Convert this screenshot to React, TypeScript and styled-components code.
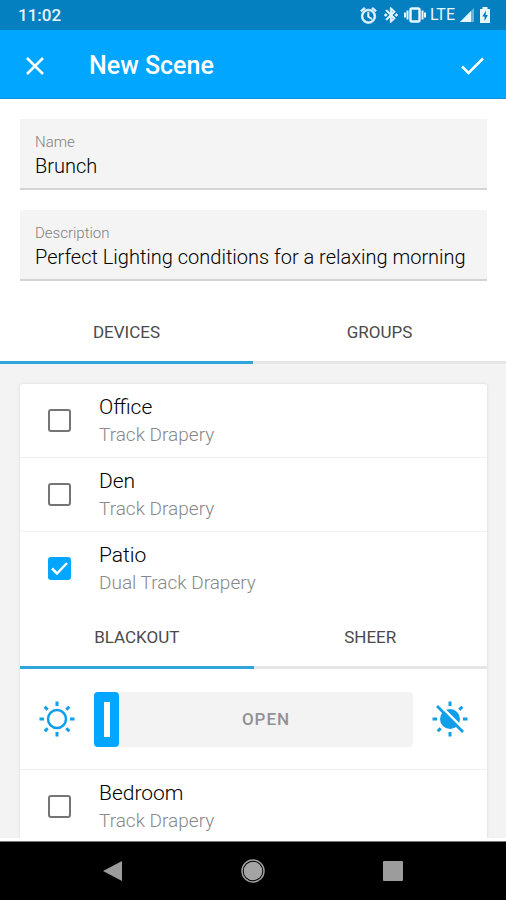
import React, { useState } from "react";
import styled, { createGlobalStyle } from "styled-components";
import { MdAlarm, MdBluetoothConnected } from "react-icons/md";

const BLUE = "#00a6ff";

const GlobalStyle = createGlobalStyle`
  *, *::before, *::after { box-sizing: border-box; }
  body { margin: 0; background: #fff; font-family: Roboto, "Noto Sans", sans-serif; color: #1a1a1a; }
  button, input { font: inherit; color: inherit; }
`;

const Screen = styled.div`
  display: flex;
  flex-direction: column;
  height: 100vh;
`;

const StatusBar = styled.div`
  display: flex;
  flex: none;
  align-items: center;
  justify-content: space-between;
  height: 30px;
  padding: 0 15px 0 18px;
  background: #047fbf;
  color: #e8f6fd;
  font-size: 17px;
  font-weight: 500;
  line-height: 32px;
`;

const StatusIcons = styled.div`
  display: flex;
  align-items: center;
  gap: 4px;

  path:not([fill]) { stroke: currentColor; stroke-width: 1px; }
`;

const Network = styled.span`
  font-size: 16px;
  font-weight: 400;
  line-height: 32px;
`;

const AppBar = styled.header`
  display: flex;
  flex: none;
  align-items: center;
  height: 69px;
  padding: 3px 20px 0;
  background: ${BLUE};
  border-bottom: 1px solid #1191d6;
  color: #fff;
`;

const IconButton = styled.button`
  display: flex;
  padding: 0;
  border: 0;
  background: none;
  cursor: pointer;
`;

const Title = styled.h1`
  flex: 1;
  margin: 0 0 0 39px;
  font-size: 25px;
  font-weight: 500;
  line-height: 30px;
`;

const Fields = styled.div`
  display: flex;
  flex: none;
  flex-direction: column;
  gap: 20px;
  padding: 20px 19px 20px 20px;
`;

const Field = styled.label`
  display: block;
  height: 71px;
  padding: 14px 10px 0 15px;
  background: #f4f4f4;
  border-bottom: 2px solid #d4d4d4;
`;

const FieldLabel = styled.span`
  display: block;
  font-size: 15px;
  font-weight: 300;
  line-height: 18px;
  color: #808080;
`;

const FieldInput = styled.input`
  display: block;
  width: 100%;
  height: 30px;
  padding: 0;
  border: 0;
  outline: 0;
  background: none;
  font-size: 20px;
  font-weight: 300;
  color: #000;
`;

const TabList = styled.div`
  display: flex;
  flex: none;
`;

const Tab = styled.button<{ $active: boolean }>`
  flex: 1;
  height: 63px;
  padding: 2px 0 0;
  border: 0;
  border-bottom: 3px solid ${(p) => (p.$active ? "#2fa5da" : "#e6e6e6")};
  background: #fff;
  font-size: 17px;
  color: #4a4a4a;
  cursor: pointer;
`;

const Body = styled.main`
  flex: 1;
  min-height: 0;
  overflow-y: auto;
  scrollbar-width: none;
  padding: 20px 19px 0 20px;
  background: #f3f3f3;
  border-bottom: 3px solid #fff;
`;

const Card = styled.section`
  background: #fff;
  border-radius: 3px 3px 0 0;
  box-shadow: 0 0 3px rgba(0, 0, 0, 0.12);
`;

const Row = styled.label<{ $divided: boolean }>`
  display: flex;
  align-items: center;
  gap: 28px;
  height: 74px;
  padding: 0 28px;
  border-bottom: 1px solid ${(p) => (p.$divided ? "#f0f0f0" : "transparent")};
  cursor: pointer;
`;

const CheckWrap = styled.span`
  display: grid;

  > * { grid-area: 1 / 1; }
`;

const CheckInput = styled.input`
  appearance: none;
  width: 23px;
  height: 23px;
  margin: 0;
  border: 2px solid #757575;
  border-radius: 3px;

  &:checked { background: ${BLUE}; border-color: ${BLUE}; }
`;

const Tick = styled.svg`
  width: 23px;
  height: 23px;
  pointer-events: none;
  fill: none;
  stroke: #fff;
`;

const RowText = styled.span`
  display: flex;
  flex-direction: column;
`;

const RowName = styled.span`
  font-size: 21px;
  line-height: 28px;
  font-weight: 300;
  color: #000;
`;

const RowKind = styled.span`
  font-size: 19px;
  line-height: 28px;
  font-weight: 300;
  color: #888;
`;

const SliderRow = styled.div`
  display: flex;
  align-items: center;
  gap: 18px;
  height: 101px;
  padding: 0 18px;
  border-bottom: 1px solid #f0f0f0;
  color: #0f9fe8;
`;

const Glyph = styled.svg`
  flex: none;
  width: 38px;
  height: 38px;
`;

const SliderTrack = styled.label`
  display: grid;
  flex: 1;
  align-items: center;

  > * { grid-area: 1 / 1; }
`;

const thumb = `
  appearance: none;
  width: 25px;
  height: 55px;
  border: 0;
  border-radius: 4px;
  background: linear-gradient(#fff, #fff) center / 6px 35px no-repeat ${BLUE};
`;

const Range = styled.input`
  appearance: none;
  width: 100%;
  height: 55px;
  margin: 0;
  border-radius: 4px;
  background: #f3f3f3;

  &::-webkit-slider-thumb { ${thumb} }
  &::-moz-range-thumb { ${thumb} }
`;

const SliderText = styled.span`
  z-index: 1;
  padding-left: 25px;
  text-align: center;
  font-size: 17px;
  font-weight: 500;
  letter-spacing: 1px;
  color: #929292;
  pointer-events: none;
`;

const NavBar = styled.nav`
  display: grid;
  flex: none;
  grid-template-columns: repeat(3, 140px);
  justify-content: center;
  justify-items: center;
  align-items: center;
  height: 59px;
  border-top: 1px solid #777;
  background: #000;
`;

const VibrateIcon = () => (
  <svg width="22" height="18" viewBox="0 0 22 18" fill="none" stroke="currentColor" strokeWidth="2">
    <rect x="6.500" y="2.500" width="9" height="13" rx="1.500" strokeWidth="2.500" />
    <path fill="none" d="M3.500 4.500v9M18.500 4.500v9M1 6.500v5M21 6.500v5" />
  </svg>
);

const SignalIcon = () => (
  <svg width="16" height="16" viewBox="0 0 16 16">
    <path d="M1 15L15 1v14z" fill="#65b5dd" />
    <path d="M1 15L12 4v11z" fill="currentColor" />
  </svg>
);

const BatteryIcon = () => (
  <svg width="12" height="18" viewBox="0 0 12 18">
    <path d="M1 3h2.500V1h5v2H11v14H1z" fill="currentColor" />
    <path d="M7 4.500L3.300 10.500h2.200V15l3.400-6H6.700z" fill="#047fbf" />
  </svg>
);

const Sun = () => (
  <Glyph viewBox="-19 -19 38 38" fill="none" stroke="currentColor">
    <circle r="9" strokeWidth="2.500" />
    <path
      strokeWidth="3"
      d="M0-17.500v4.500M0 13v4.500M-17.500 0h4.500M13 0h4.500M-12.300-12.300l3 3M9.300 9.300l3 3M-12.300 12.300l3-3M9.300-9.300l3-3"
    />
  </Glyph>
);

const SunOff = () => (
  <Glyph viewBox="-19 -19 38 38" fill="none" stroke="currentColor">
    <circle r="10" fill="currentColor" stroke="none" />
    <path strokeWidth="3" d="M0-17.500v4.500M0 13v4.500M-17.500 0h4.500M13 0h4.500M-12.300 12.300l3-3M9.300-9.300l3-3" />
    <path stroke="#fff" strokeWidth="2.500" d="M-9.500-13L13.500 10" />
    <path strokeWidth="2.800" d="M-13-13L13 13" />
  </Glyph>
);

type Device = { name: string; kind: string; divided: boolean };

const DEVICES: Device[] = [
  { name: "Office", kind: "Track Drapery", divided: true },
  { name: "Den", kind: "Track Drapery", divided: true },
  { name: "Patio", kind: "Dual Track Drapery", divided: false },
];
const BEDROOM: Device = { name: "Bedroom", kind: "Track Drapery", divided: false };

function DeviceRow({ device, initial = false }: { device: Device; initial?: boolean }) {
  const [checked, setChecked] = useState(initial);
  return (
    <Row $divided={device.divided}>
      <CheckWrap>
        <CheckInput type="checkbox" checked={checked} onChange={(e) => setChecked(e.target.checked)} />
        {checked && (
          <Tick viewBox="0 0 23 23">
            <path d="M4 11.500l5 5L19 6" strokeWidth="2.500" />
          </Tick>
        )}
      </CheckWrap>
      <RowText>
        <RowName>{device.name}</RowName>
        <RowKind>{device.kind}</RowKind>
      </RowText>
    </Row>
  );
}

function Tabs({ labels }: { labels: string[] }) {
  const [active, setActive] = useState(0);
  return (
    <TabList role="tablist">
      {labels.map((label, i) => (
        <Tab key={label} role="tab" aria-selected={i === active} $active={i === active} onClick={() => setActive(i)}>
          {label}
        </Tab>
      ))}
    </TabList>
  );
}

export default function App() {
  return (
    <Screen>
      <GlobalStyle />
      <StatusBar>
        <span>11:02</span>
        <StatusIcons>
          <MdAlarm size={19} />
          <MdBluetoothConnected size={18} />
          <VibrateIcon />
          <Network>LTE</Network>
          <SignalIcon />
          <BatteryIcon />
        </StatusIcons>
      </StatusBar>
      <AppBar>
        <IconButton aria-label="Close">
          <svg width="30" height="30" viewBox="0 0 30 30" fill="none" stroke="currentColor" strokeWidth="2.500">
            <path d="M7 7l16 16M23 7L7 23" />
          </svg>
        </IconButton>
        <Title>New Scene</Title>
        <IconButton aria-label="Save">
          <svg width="28" height="28" viewBox="0 0 28 28" fill="none" stroke="currentColor" strokeWidth="2.500">
            <path d="M4 14.500l6.500 6.500L25 6.500" />
          </svg>
        </IconButton>
      </AppBar>
      <Fields>
        <Field>
          <FieldLabel>Name</FieldLabel>
          <FieldInput defaultValue="Brunch" />
        </Field>
        <Field>
          <FieldLabel>Description</FieldLabel>
          <FieldInput defaultValue="Perfect Lighting conditions for a relaxing morning" />
        </Field>
      </Fields>
      <Tabs labels={["DEVICES", "GROUPS"]} />
      <Body>
        <Card>
          {DEVICES.map((d) => (
            <DeviceRow key={d.name} device={d} initial={d.name === "Patio"} />
          ))}
          <Tabs labels={["BLACKOUT", "SHEER"]} />
          <SliderRow>
            <Sun />
            <SliderTrack>
              <Range type="range" min={0} max={100} defaultValue={0} />
              <SliderText>OPEN</SliderText>
            </SliderTrack>
            <SunOff />
          </SliderRow>
          <DeviceRow device={BEDROOM} />
        </Card>
      </Body>
      <NavBar>
        <IconButton aria-label="Back">
          <svg width="22" height="22" viewBox="0 0 22 22"><path d="M1 11L20 1v20z" fill="#9c9c9c" /></svg>
        </IconButton>
        <IconButton aria-label="Home">
          <svg width="24" height="24" viewBox="0 0 24 24" fill="none">
            <circle cx="12" cy="12" r="11" stroke="#9c9c9c" strokeWidth="1.500" />
            <circle cx="12" cy="12" r="9.300" fill="#a4a4a4" />
          </svg>
        </IconButton>
        <IconButton aria-label="Recent apps">
          <svg width="20" height="20" viewBox="0 0 20 20"><rect width="20" height="20" rx="1" fill="#9c9c9c" /></svg>
        </IconButton>
      </NavBar>
    </Screen>
  );
}
